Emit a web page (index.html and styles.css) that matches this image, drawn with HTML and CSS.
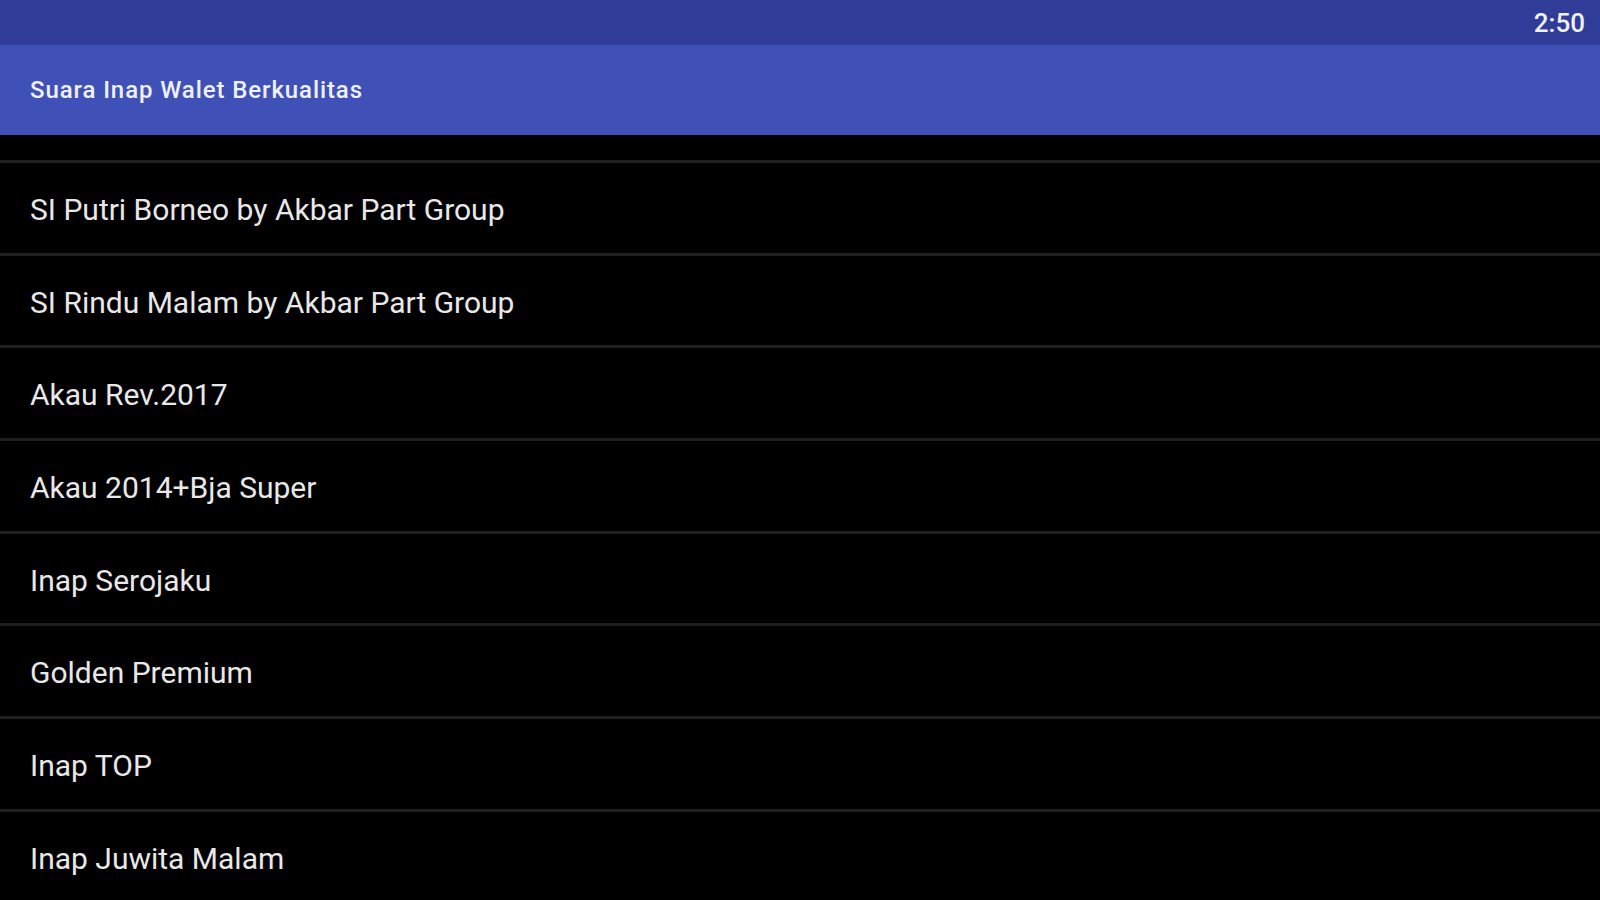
FILE: index.html
```html
<!DOCTYPE html>
<html lang="id">
<head>
  <meta charset="UTF-8" />
  <meta name="viewport" content="width=device-width, initial-scale=1.0" />
  <title>Suara Inap Walet Berkualitas</title>
  <link rel="stylesheet" href="styles.css">
</head>
<body>
  <div class="status-bar">
    <span class="clock">2:50</span>
  </div>
  <div class="toolbar">
    <h1 class="toolbar-title">Suara Inap Walet Berkualitas</h1>
  </div>

  <ul class="track-list">
    <li class="track">SI Putri Borneo by Akbar Part Group</li>
    <li class="track">SI Rindu Malam by Akbar Part Group</li>
    <li class="track">Akau Rev.2017</li>
    <li class="track">Akau 2014+Bja Super</li>
    <li class="track">Inap Serojaku</li>
    <li class="track">Golden Premium</li>
    <li class="track">Inap TOP</li>
    <li class="track">Inap Juwita Malam</li>
  </ul>
</body>
</html>
```

FILE: styles.css
```css
* {
  box-sizing: border-box;
  margin: 0;
  padding: 0;
  font-family: Roboto, 'Noto Sans', sans-serif;
}
body {
  background-color: #000;
  width: 1600px;
  height: 900px;
  overflow: hidden;
}
.status-bar {
  height: 45px;
  background-color: #2f3c98;
  display: flex;
  justify-content: flex-end;
  align-items: center;
  padding-right: 15px;
}
.clock {
  color: #f0f0f5;
  font-size: 26px;
  font-weight: 500;
}
.toolbar {
  height: 90px;
  background-color: #3f51b7;
  display: flex;
  align-items: center;
  padding-left: 30px;
}
.toolbar-title {
  color: #eef0fa;
  font-size: 24px;
  font-weight: 500;
  letter-spacing: 0.9px;
}
.track-list {
  list-style: none;
  padding-top: 25px;
}
.track {
  height: 92.7px;
  border-top: 3px solid #1f1f1f;
  display: flex;
  align-items: center;
  padding: 3px 0 0 30px;
  color: #e8e8e8;
  font-size: 30px;
}
```
